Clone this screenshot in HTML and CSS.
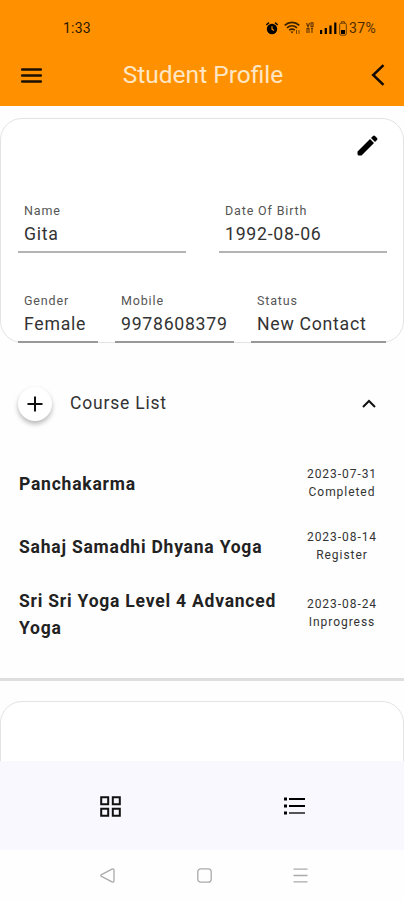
FILE: index.html
```
<!DOCTYPE html>
<html lang="en">
<head>
<meta charset="utf-8">
<title>Student Profile</title>
<link rel="stylesheet" href="styles.css">
</head>
<body>
<div class="phone">
  <header class="header">
    <div class="status-bar">
      <span class="clock">1:33</span>
      <div class="status-icons">
        <svg class="alarm" width="12" height="13" viewBox="0 0 12 13"><circle cx="6" cy="7" r="5.2"/><path d="M.3 3 3 .6M11.7 3 9 .6" stroke="#1c1000" stroke-width="1.6"/><path d="M6 4.2V7.2L8 8.6" fill="none" stroke="#ff9100" stroke-width="1.2"/></svg>
        <svg class="wifi" width="17" height="14" viewBox="0 0 17 14" fill="none" stroke="#3a2100"><path d="M.7 4.3C5 .3 11 .3 15.3 4.3M3 6.8c3-2.6 7-2.6 10 0M5.2 9.2c1.7-1.4 3.9-1.4 5.6 0" stroke-width="1.7"/><path d="m6.5 10.5 1.5 2 1.5-2z" fill="#3a2100" stroke="none"/><path d="M12.5 9v4M15 9v4" stroke-width="1" opacity=".7"/></svg>
        <svg class="volte" width="8" height="12" viewBox="0 0 8 12" fill="none" stroke="#5a3300" stroke-width="1.1"><path d="m.5 1 1.5 4 1.5-4M5 .7h2v4H5zM1 11V6.5h2V11M5 6.5h2M6 6.5V11"/></svg>
        <svg class="signal" width="17" height="12" viewBox="0 0 17 12"><path d="M0 8h2.2v4H0zM4.7 6h2.2v6H4.7zM9.4 3.5h2.2V12H9.4zM14.2.5h2.2V12h-2.2z"/></svg>
        <svg class="battery" width="8" height="15" viewBox="0 0 8 15"><path d="M2.5 2V.7h3V2M.7 3.5Q.7 2.2 2 2.2h4Q7.3 2.2 7.3 3.5v9.3q0 1.4-1.3 1.4H2Q.7 14.200.7 12.800z" fill="none" stroke="#6a3c00"/><path d="M2 9h4v4H2z"/></svg>
        <span class="percent">37%</span>
      </div>
    </div>
    <div class="title-bar">
      <svg class="menu" width="21" height="15" viewBox="0 0 21 15"><path d="M1 1.500h19M1 7.500h19M1 13.500h19" stroke="#1c1000" stroke-width="2.400" stroke-linecap="round"/></svg>
      <h1>Student Profile</h1>
      <svg class="back" width="14" height="22" viewBox="0 0 14 22"><path d="M12.500 1.200 2.200 11l10.300 9.800" fill="none" stroke="#110a00" stroke-width="2.500"/></svg>
    </div>
  </header>

  <main class="content">
    <section class="card profile">
      <div class="card-actions">
        <svg width="21" height="21" viewBox="0 0 21 21"><path d="M.5 16.500 13 4l4 4L4.500 20.500H2Q.5 20.500.5 19zM14 3 16 1q1-1 2 0l2 2q1 1 0 2l-2 2z"/></svg>
      </div>
      <div class="fields two">
        <div class="field"><label>Name</label><span>Gita</span></div>
        <div class="field dob"><label>Date Of Birth</label><span>1992-08-06</span></div>
      </div>
      <div class="fields three">
        <div class="field"><label>Gender</label><span>Female</span></div>
        <div class="field"><label>Mobile</label><span>9978608379</span></div>
        <div class="field"><label>Status</label><span>New Contact</span></div>
      </div>
    </section>

    <section class="courses">
      <div class="courses-head">
        <button class="add" aria-label="Add course"><svg width="16" height="16" viewBox="0 0 16 16"><path d="M8 .5v15M.5 8h15" stroke="#111" stroke-width="2"/></svg></button>
        <h2>Course List</h2>
        <svg class="chevron" width="14" height="9" viewBox="0 0 14 9"><path d="M1 8l6-6 6 6" fill="none" stroke="#111" stroke-width="2"/></svg>
      </div>
      <ul class="course-list">
        <li><strong>Panchakarma</strong><div class="state"><span>2023-07-31</span><span>Completed</span></div></li>
        <li><strong>Sahaj Samadhi Dhyana Yoga</strong><div class="state"><span>2023-08-14</span><span>Register</span></div></li>
        <li class="tall"><strong>Sri Sri Yoga Level 4 Advanced Yoga</strong><div class="state"><span>2023-08-24</span><span>Inprogress</span></div></li>
      </ul>
    </section>
    <section class="card next"></section>
  </main>

  <nav class="tabs">
    <svg width="21" height="21" viewBox="0 0 21 21"><path d="M1.200 1.200h7v7h-7zM12.800 1.200h7v7h-7zM1.200 12.800h7v7h-7zM12.800 12.800h7v7h-7z" fill="none" stroke="#111" stroke-width="2"/></svg>
    <svg width="21" height="18" viewBox="0 0 21 18"><path d="M0 .5h3v3H0zM0 7.500h3v3H0zM0 14.500h3v3H0zM5 1h16v2H5zM5 8h16v2H5z"/><path d="M5 15h16v2H5z" fill="#555"/></svg>
  </nav>
  <div class="system-nav">
    <svg width="15" height="15" viewBox="0 0 15 15"><path d="M1.500 6.600 12 1.200q2-.8 2 1.300v10q0 2.100-2 1.300L1.500 8.400q-1.500-.9 0-1.800z"/></svg>
    <svg width="15" height="15" viewBox="0 0 15 15"><rect x=".8" y=".8" width="13.400" height="13.400" rx="3"/></svg>
    <svg width="15" height="15" viewBox="0 0 15 15"><path d="M.5 1.200h14M.5 7.500h14M.5 13.800h14"/></svg>
  </div>
</div>
</body>
</html>
```
FILE: styles.css
```
* { box-sizing: border-box; margin: 0; padding: 0; }
body { background: #fefefe; font-family: Roboto, "Liberation Sans", sans-serif; color: #222; }
svg { display: block; flex: none; }
.phone { width: 404px; height: 900px; display: flex; flex-direction: column; overflow: hidden; }

.header { height: 106px; flex: none; background: #ff9100; }
.status-bar { display: flex; justify-content: space-between; align-items: center; height: 56px; padding: 0 28px 0 63px; }
.clock { font-size: 14px; font-weight: 400; letter-spacing: 0.2px; color: #2b1800; }
.status-icons { display: flex; align-items: center; margin-right: 0; }
.wifi { margin-left: 6px; }
.volte { margin-left: 5px; }
.signal { margin-left: 6px; }
.battery { margin-left: 2px; }
.percent { margin-left: 2px; font-size: 14px; letter-spacing: 0.3px; color: #4d2c00; }
.title-bar { display: grid; grid-template-columns: 35px 1fr 35px; align-items: center; height: 38px; padding: 0 19px 0 21px; }
.title-bar h1 { font-size: 24.500px; font-weight: 400; line-height: 28px; text-align: center; white-space: nowrap; color: #ffe6c4; }
.back { justify-self: end; }

.content { flex: 1; min-height: 0; overflow: hidden; padding-top: 12px; }
.card { border: 1.500px solid #e3e3e6; border-radius: 22px; background: #fff; }
.profile { height: 225px; padding: 0 16px 0 17px; }
.card-actions { display: flex; justify-content: flex-end; height: 81px; padding: 16px 9px 0 0; }
.fields { display: grid; }
.two { grid-template-columns: 168px 168px; column-gap: 33px; height: 90px; }
.three { grid-template-columns: 80px 119px 135px; column-gap: 17px; }
.field { display: flex; flex-direction: column; height: 53px; padding: 3px 6px 0; border-bottom: 2.500px solid #b4b4b4; }
.three .field { border-bottom-color: #999; }
.field label { font-size: 12.500px; line-height: 16px; letter-spacing: 0.850px; color: #555; }
.field span { margin-top: 5px; font-size: 17.700px; line-height: 20px; letter-spacing: 0.720px; white-space: nowrap; color: #333; }

.courses { height: 338px; border-bottom: 3px solid #dedede; padding: 43px 18px 0; }
.courses-head { display: flex; align-items: center; height: 36px; }
.add { display: flex; align-items: center; justify-content: center; width: 34px; height: 34px; border: 0; border-radius: 50%; background: #fff; box-shadow: 0 3px 5px rgba(0, 0, 0, 0.280); }
.courses-head h2 { flex: 1; margin-left: 18px; padding-bottom: 2px; font-size: 17.500px; font-weight: 400; letter-spacing: 0.800px; color: #333; }
.chevron { margin: 0 10px 2px 0; }
.course-list { list-style: none; margin-top: 30px; }
.course-list li { display: flex; align-items: center; justify-content: space-between; height: 63px; }
.course-list .tall { height: 72px; }
.course-list strong { width: 270px; padding: 2px 0 0 1px; font-size: 17.500px; font-weight: 700; line-height: 27px; letter-spacing: 0.780px; }
.state { display: flex; flex-direction: column; align-items: center; width: 88px; padding-bottom: 2px; font-size: 12px; line-height: 18px; letter-spacing: 0.950px; color: #333; }
.next { height: 120px; margin-top: 20px; }

.tabs { display: flex; justify-content: space-between; align-items: center; height: 89px; flex: none; padding: 1px 99px 0 100px; background: #faf8ff; }
.system-nav { display: flex; justify-content: space-between; height: 50px; flex: none; padding: 18px 96px 0 100px; }
.system-nav svg { fill: none; stroke: #aaa; stroke-width: 1.300; }
```
